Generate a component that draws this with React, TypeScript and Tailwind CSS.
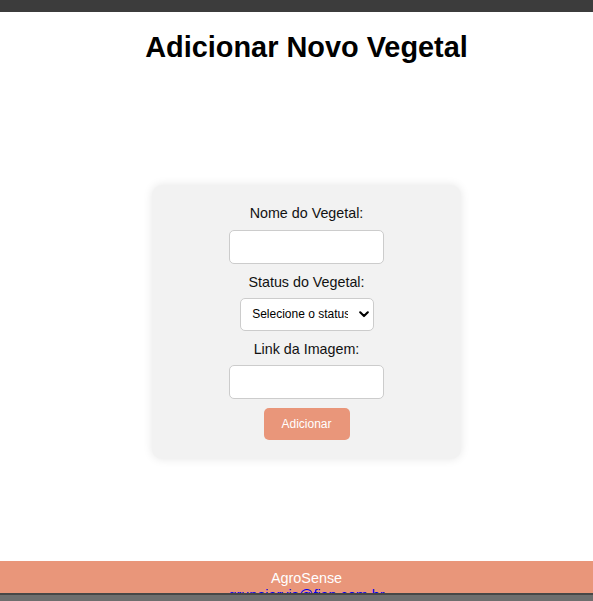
import React from "react";

export default function App() {
  return (
    <div className="relative h-[601px] w-[593px] overflow-hidden bg-white font-['Liberation_Sans',Arial,sans-serif] text-black">
      <div className="flex w-[613px] flex-col">
        <div className="h-[12px] w-full bg-[#3c3c3c]" />
        <h1 className="mb-[19px] mt-[19px] text-center text-[28.9px] font-bold leading-[33px]">
          Adicionar Novo Vegetal
        </h1>
        <main className="flex h-[478px] items-center justify-center">
          <form
            className="flex w-[309px] flex-col items-center rounded-[10px] bg-[#f2f2f2] pb-[19px] pt-[20px] shadow-[0_0_10px_rgba(0,0,0,0.1)]"
            onSubmit={(e) => e.preventDefault()}
          >
            <label className="mb-[9px] text-[14.3px] leading-[16px] text-[#111111]">Nome do Vegetal:</label>
            <input
              type="text"
              className="mb-[10px] h-[34px] w-[155px] rounded-[5px] border border-[#cccccc] bg-white px-2 text-[13px] outline-none"
            />
            <label className="mb-[8px] text-[14.3px] leading-[16px] text-[#111111]">Status do Vegetal:</label>
            <div className="relative mb-[10px] h-[33px] w-[134px]">
              <select
                defaultValue=""
                className="h-[33px] w-[134px] appearance-none overflow-hidden rounded-[5px] border border-[#cccccc] bg-white pl-[11.7px] pr-[24.7px] text-[12px] leading-[16px] text-black outline-none"
              >
                <option value="" disabled>
                  Selecione o status
                </option>
                <option value="saudavel">Saudável</option>
                <option value="doente">Doente</option>
              </select>
              <svg
                className="pointer-events-none absolute left-[119.5px] top-[13px]"
                width="10"
                height="7"
                viewBox="0 0 10 7"
                fill="none"
              >
                <path d="M1.2 1.3 L5 5.1 L8.8 1.3" stroke="#000" strokeWidth="2.1" strokeLinecap="round" strokeLinejoin="round" />
              </svg>
            </div>
            <label className="mb-[8.4px] text-[14.3px] leading-[16px] text-[#111111]">Link da Imagem:</label>
            <input
              type="text"
              className="mb-[9.3px] h-[34px] w-[155px] rounded-[5px] border border-[#cccccc] bg-white px-2 text-[13px] outline-none"
            />
            <button
              type="submit"
              className="h-[32px] w-[86px] rounded-[5px] bg-[#e9967a] text-[12px] text-white"
            >
              Adicionar
            </button>
          </form>
        </main>
        <footer className="bg-[#e9967a] pb-[10px] pt-[9px] text-center text-[14.4px] leading-[16.5px]">
          <p className="text-white">AgroSense</p>
          <a href="#" className="text-[#0000ee] underline">
            grupojarvis@fiap.com.br
          </a>
        </footer>
      </div>
      <div className="absolute bottom-0 left-0 h-[8px] w-full border-t-2 border-[#474747] bg-[#6e6e6e]" />
    </div>
  );
}
